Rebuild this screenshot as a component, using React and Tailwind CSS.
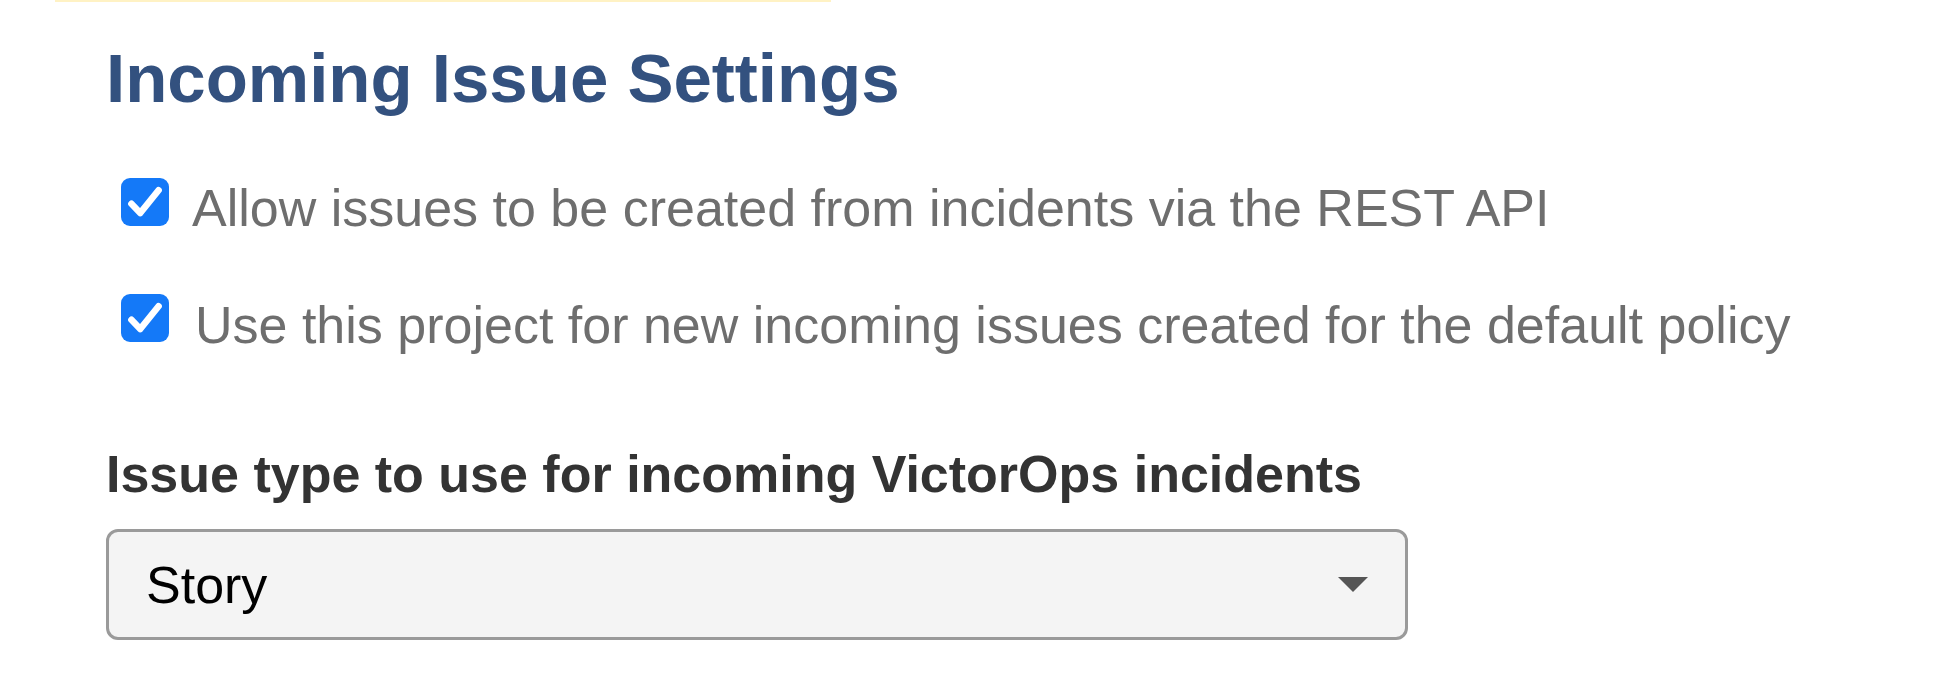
import React from "react";

const CheckIcon = () => (
  <svg viewBox="0 0 24 24" className="h-full w-full">
    <path
      d="M4.6 13 L9.4 18 L19.4 5.6"
      fill="none"
      stroke="#ffffff"
      strokeWidth="3.6"
      strokeLinecap="round"
      strokeLinejoin="round"
    />
  </svg>
);

const Checkbox = ({ label, gap, offset }) => (
  <div className="flex items-start pl-[15px]">
    <div className="h-[48px] w-[48px] shrink-0 rounded-[9px] bg-[#1479f8] p-[2px]">
      <CheckIcon />
    </div>
    <span
      className="text-[52px] leading-[52px] text-[#6e6e6e] whitespace-nowrap"
      style={{ marginLeft: gap, marginTop: offset }}
    >
      {label}
    </span>
  </div>
);

export default function App() {
  return (
    <div className="min-h-[700px] w-[1938px] bg-white font-['Liberation_Sans',Arial,sans-serif]">
      {/* faint yellow rule left over from the panel above */}
      <div className="ml-[55px] h-[2px] w-[776px] bg-[#fff2c4]" />

      <div className="flex flex-col pl-[106px]">
        <h1 className="mt-[42px] text-[69px] font-bold leading-[69px] text-[#33517f]">
          Incoming Issue Settings
        </h1>

        <div className="mt-[65px] flex flex-col gap-[60px]">
          <Checkbox
            label="Allow issues to be created from incidents via the REST API"
            gap={23}
            offset={4}
          />
          <Checkbox
            label="Use this project for new incoming issues created for the default policy"
            gap={26}
            offset={5}
          />
        </div>

        <label className="mt-[97px] text-[52px] font-bold leading-[52px] text-[#333333]">
          Issue type to use for incoming VictorOps incidents
        </label>

        <div className="mt-[29px] flex h-[111px] w-[1302px] items-center justify-between rounded-[12px] border-[3px] border-[#9a9a9a] bg-[#f4f4f4] pl-[37px] pr-[37px]">
          <span className="text-[52px] leading-[52px] text-black">Story</span>
          <svg width="30" height="15" viewBox="0 0 30 15">
            <path d="M0 0 H30 L15 15 Z" fill="#555555" />
          </svg>
        </div>
      </div>
    </div>
  );
}
